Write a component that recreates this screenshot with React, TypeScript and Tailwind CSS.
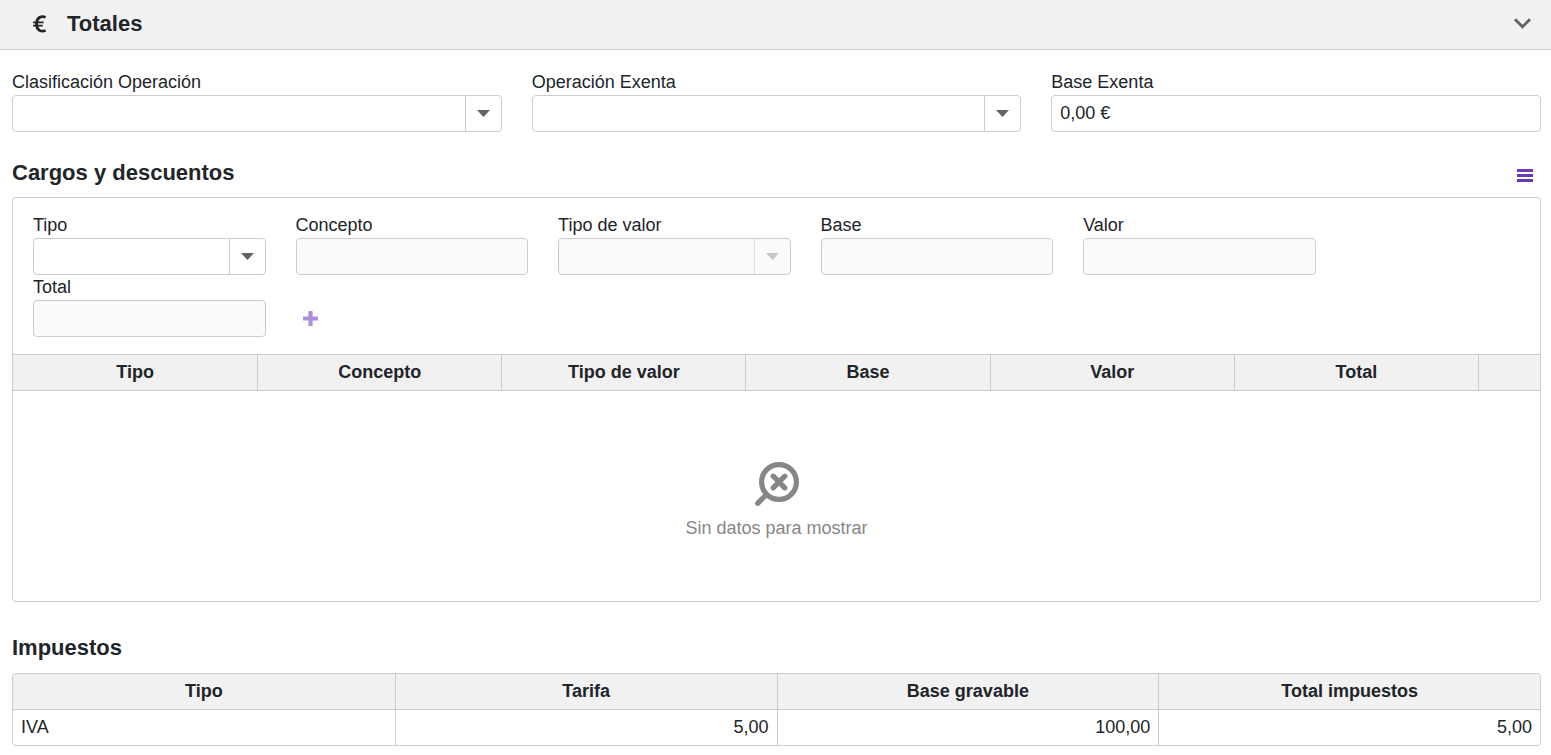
import { useState } from 'react';

const chargeColumns = ['Tipo', 'Concepto', 'Tipo de valor', 'Base', 'Valor', 'Total'];
const taxColumns = ['Tipo', 'Tarifa', 'Base gravable', 'Total impuestos'];
const taxes = [{ type: 'IVA', rate: '5,00', base: '100,00', total: '5,00' }];

type FieldProps = {
  id: string;
  label: string;
  disabled?: boolean;
};

function SelectField({ id, label, disabled }: FieldProps) {
  return (
    <div>
      <label htmlFor={id} className="block leading-[25px]">
        {label}
      </label>
      <div className="relative">
        <select
          id={id}
          disabled={disabled}
          className="block h-[37px] w-full appearance-none rounded-[4px] border border-[#ccc] bg-white pl-2 pr-11 disabled:bg-[#fafafa] disabled:opacity-100"
        >
          <option value=""></option>
        </select>
        <span
          className={`pointer-events-none absolute inset-y-px right-px flex w-9 items-center justify-center border-l ${
            disabled ? 'border-[#ddd] text-[#c4c5c7]' : 'border-[#ccc] text-[#5f6368]'
          }`}
        >
          <svg className="h-[7px] w-[13px]" viewBox="0 0 13 7" fill="currentColor">
            <path d="M0 0h13L6.5 7z" />
          </svg>
        </span>
      </div>
    </div>
  );
}

function TextField({ id, label, disabled, value = '' }: FieldProps & { value?: string }) {
  return (
    <div>
      <label htmlFor={id} className="block leading-[25px]">
        {label}
      </label>
      <input
        id={id}
        type="text"
        defaultValue={value}
        disabled={disabled}
        className="block h-[37px] w-full rounded-[4px] border border-[#ccc] bg-white px-2 disabled:bg-[#fafafa]"
      />
    </div>
  );
}

export default function App() {
  const [open, setOpen] = useState(true);

  return (
    <div className="min-h-screen bg-white font-['Liberation_Sans',Arial,sans-serif] text-[18px] leading-6 text-[#212529]">
      {/* Section header */}
      <button
        type="button"
        aria-expanded={open}
        onClick={() => setOpen(!open)}
        className="flex h-[50px] w-full items-center border-b border-[#ccc] bg-[#f1f1f1] pb-[2px] pl-8 pr-5 text-left"
      >
        <svg
          className="mr-5 h-[18px] w-[15px]"
          viewBox="0 0 15 18"
          fill="none"
          stroke="currentColor"
        >
          <path d="M13.600 2.300C9.300.5 4.500 2.500 4.500 9s4.800 8.300 9.100 6.500" strokeWidth="2.8" />
          <path d="M1 7.300h10.600M1 10.700h9.800" strokeWidth="1.8" />
        </svg>
        <span className="text-[22px] font-bold">Totales</span>
        <svg
          className="ml-auto h-[11px] w-[17px] text-[#5f6368]"
          viewBox="0 0 17 11"
          fill="none"
          stroke="currentColor"
          strokeWidth="2.8"
        >
          <path d="M1 1.2l7.5 7.5L16 1.2" />
        </svg>
      </button>

      {open && (
        <main className="pb-2 pl-3 pr-[10px] pt-5">
          <div className="grid grid-cols-3 gap-x-[30px]">
            <SelectField id="classification" label="Clasificación Operación" />
            <SelectField id="exempt-operation" label="Operación Exenta" />
            <TextField id="exempt-base" label="Base Exenta" value="0,00 €" />
          </div>

          {/* Charges and discounts */}
          <div className="mt-[25px] flex h-10 items-start justify-between pr-2">
            <h2 className="text-[22px] font-bold leading-8">Cargos y descuentos</h2>
            <button type="button" aria-label="Menú" className="mt-[11px] text-[#673ab7]">
              <svg className="h-[15px] w-4" viewBox="0 0 16 15" fill="currentColor">
                <path d="M0 1h16v3H0zM0 6h16v3H0zM0 11h16v3H0z" />
              </svg>
            </button>
          </div>
          <section className="overflow-hidden rounded-[4px] border border-[#ccc]">
            <div className="ml-5 grid w-[84%] grid-cols-5 gap-x-[30px] pb-[17px] pt-[15px]">
              <SelectField id="charge-type" label="Tipo" />
              <TextField id="charge-concept" label="Concepto" disabled />
              <SelectField id="charge-value-type" label="Tipo de valor" disabled />
              <TextField id="charge-base" label="Base" disabled />
              <TextField id="charge-value" label="Valor" disabled />
              <TextField id="charge-total" label="Total" disabled />
              <div className="flex items-end">
                <button
                  type="button"
                  aria-label="Añadir"
                  className="flex h-[37px] w-[30px] items-center justify-center text-[#ab8fdb]"
                >
                  <svg className="size-[15px]" viewBox="0 0 15 15" fill="currentColor">
                    <path d="M6 0h3a.6.6 0 0 1 .6.6v4.8h4.8a.6.6 0 0 1 .6.6v3a.6.6 0 0 1-.6.6H9.600v4.8a.6.6 0 0 1-.6.6H6a.6.6 0 0 1-.6-.6V9.600H.6A.6.6 0 0 1 0 9V6a.6.6 0 0 1 .6-.6h4.800V.6A.6.6 0 0 1 6 0z" />
                  </svg>
                </button>
              </div>
            </div>
            <table className="w-full table-fixed border-separate border-spacing-0">
              <thead>
                <tr className="h-[37px] bg-[#f1f1f1]">
                  {chargeColumns.map((column) => (
                    <th
                      key={column}
                      className="border-y border-l border-[#ccc] px-0 pb-[2px] pt-0 font-bold first:border-l-0"
                    >
                      {column}
                    </th>
                  ))}
                  <th className="w-[62px] border-y border-l border-[#ccc] p-0"></th>
                </tr>
              </thead>
              <tbody>
                <tr>
                  <td colSpan={7} className="h-[210px] px-0 pb-0 pt-[9px] text-[#868686]">
                    <div className="flex flex-col items-center gap-[10px]">
                      <svg
                        className="size-11"
                        viewBox="0 0 44 44"
                        fill="none"
                        stroke="currentColor"
                        strokeWidth="5.2"
                        strokeLinecap="round"
                      >
                        <circle cx="24" cy="20" r="17.400" />
                        <path d="M11.500 32.500L2.700 41.300M18.200 14.200l11.600 11.600M29.800 14.200L18.200 25.800" />
                      </svg>
                      <span>Sin datos para mostrar</span>
                    </div>
                  </td>
                </tr>
              </tbody>
            </table>
          </section>

          {/* Taxes */}
          <h2 className="mb-[9px] mt-[30px] text-[22px] font-bold leading-8">Impuestos</h2>
          <div className="overflow-hidden rounded-[4px] border border-[#ccc]">
            <table className="w-full table-fixed border-separate border-spacing-0">
              <thead>
                <tr className="h-9 bg-[#f1f1f1]">
                  {taxColumns.map((column) => (
                    <th
                      key={column}
                      className="border-b border-l border-[#ccc] px-0 pb-[2px] pt-0 font-bold first:border-l-0"
                    >
                      {column}
                    </th>
                  ))}
                </tr>
              </thead>
              <tbody>
                {taxes.map((tax) => (
                  <tr key={tax.type} className="h-[35px]">
                    <td className="px-2 pb-[2px] pt-0">{tax.type}</td>
                    <td className="border-l border-[#ccc] px-2 pb-[2px] pt-0 text-right">{tax.rate}</td>
                    <td className="border-l border-[#ccc] px-2 pb-[2px] pt-0 text-right">{tax.base}</td>
                    <td className="border-l border-[#ccc] px-2 pb-[2px] pt-0 text-right">{tax.total}</td>
                  </tr>
                ))}
              </tbody>
            </table>
          </div>
        </main>
      )}
    </div>
  );
}
